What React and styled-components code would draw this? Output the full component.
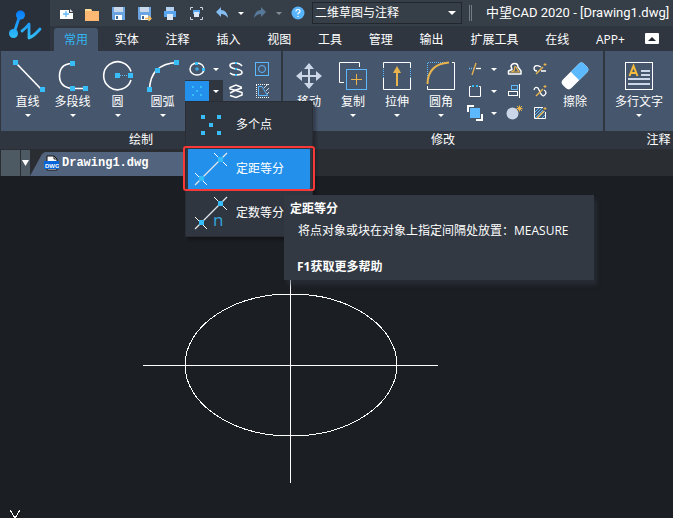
import React, { useState } from 'react'
import styled, { createGlobalStyle } from 'styled-components'

const GlobalStyle = createGlobalStyle`
  * {
    box-sizing: border-box;
  }
  body {
    margin: 0;
    background: #1b1e23;
    color: #fff;
    font-family: "Open Sans", "Noto Sans CJK SC", sans-serif;
    font-size: 12px;
    line-height: 16px;
  }
  button, select {
    font: inherit;
    color: inherit;
    border: 0;
    padding: 0;
    margin: 0;
    background: none;
  }
  svg {
    display: block;
    flex: none;
  }
`

const blue = '#38bdfb'
const sky = '#5cb8ff'
const gold = '#e9b44c'
const pale = '#cbd6e8'

const Window = styled.div`
  display: flex;
  flex-direction: column;
  min-height: 100vh;
  overflow-x: clip;
  background: #1b1e23;
`

const Header = styled.header`
  display: flex;
  background: #30363f;
`

const AppButton = styled.button`
  flex: none;
  width: 50px;
  background: #2a3039;
`

const HeaderRows = styled.div`
  flex: 1;
  min-width: 0;
`

const TitleBar = styled.div`
  display: flex;
  align-items: center;
  height: 26px;
  padding-left: 3px;
  background: #363e47;
`

const ToolButton = styled.button`
  display: flex;
  flex: none;
  align-items: center;
  justify-content: center;
  width: ${props => props.$narrow ? `12px` : `26px`};
  height: 24px;
`

const SelectBox = styled.div`
  position: relative;
  flex: none;
  margin-left: 1px;
  svg {
    position: absolute;
    top: 9px;
    right: 6px;
    pointer-events: none;
  }
`

const Workspace = styled.select`
  width: 150px;
  height: 22px;
  padding: 0 2px;
  appearance: none;
  border: 1px solid #22272e;
  background: #363e47;
  outline: 0;
  option {
    background: #363e47;
  }
`

const Grip = styled.span`
  flex: none;
  width: 3px;
  height: 16px;
  margin: 0 14px 0 7px;
  border: solid #747b83;
  border-width: 0 1px;
`

const Title = styled.h1`
  margin: 0;
  font-family: Roboto, "Noto Sans CJK SC", sans-serif;
  font-size: 13px;
  font-weight: 400;
  white-space: nowrap;
`

const TabBar = styled.div`
  display: flex;
  align-items: flex-end;
  height: 25px;
  padding: 0 14px 0 4px;
`

const Tabs = styled.nav`
  display: flex;
  flex: 1;
  justify-content: space-between;
  margin-right: 10px;
`

const Tab = styled.button`
  height: 23px;
  padding: 0 10px;
  border-radius: 3px 3px 0 0;
  white-space: nowrap;
  color: ${props => props.$active ? `#33b5f2` : `#fff`};
  background: ${props => props.$active ? `#46566c` : `none`};
`

const Collapse = styled.button`
  display: flex;
  align-items: center;
  justify-content: center;
  align-self: center;
  width: 14px;
  height: 11px;
  border-radius: 1px;
  background: #fff;
`

const Ribbon = styled.section`
  position: relative;
  z-index: 1;
  display: flex;
  gap: 2px;
  padding-left: 1px;
  background: #30363f;
`

const Panel = styled.section`
  flex: ${props => props.$fill ? `1 0 107px` : `none`};
`

const PanelBody = styled.div`
  display: flex;
  height: 80px;
  padding: ${props => props.$flush ? `7px 0 0` : `7px 6px 0 4px`};
  background: #46566c;
`

const PanelTitle = styled.h2`
  margin: 0;
  font-size: 12px;
  font-weight: 400;
  line-height: 18px;
  text-align: center;
  background: #30363f;
`

const BigButton = styled.button`
  display: flex;
  flex-direction: column;
  align-items: center;
  width: ${props => props.$width}px;
  height: 64px;
  white-space: nowrap;
  span {
    margin-bottom: 4px;
  }
`

const SmallGrid = styled.div`
  display: grid;
  grid-template-columns: 38px 26px 26px;
  grid-auto-rows: 22px;
`

const SmallButton = styled.button`
  display: flex;
  align-items: center;
  justify-content: center;
`

const Split = styled.div`
  position: relative;
  display: flex;
  align-items: center;
  background: ${props => props.$open ? `#30363f` : `none`};
`

const SplitMain = styled(SmallButton)`
  width: 24px;
  height: 20px;
  background: ${props => props.$open ? `#2391eb` : `none`};
`

const SplitCaret = styled(SmallButton)`
  width: 14px;
  height: 20px;
`

const Menu = styled.div`
  position: absolute;
  top: 21px;
  left: 0;
  display: grid;
  gap: 4px;
  width: 128px;
  padding: 3px 2px;
  border: 1px solid #2a2e34;
  background: #30363f;
  box-shadow: 3px 3px 3px rgba(0, 0, 0, 0.3);
`

const MenuItem = styled.button`
  display: flex;
  align-items: center;
  gap: 5px;
  width: 100%;
  height: 40px;
  padding-left: 3px;
  text-align: left;
  white-space: nowrap;
  background: ${props => props.$active ? `#2391eb` : `none`};
`

const Marked = styled.div`
  position: relative;
  &::after {
    content: '';
    position: absolute;
    inset: -3px -5px -2px;
    border: 2px solid #f93838;
    border-radius: 3px;
    pointer-events: none;
  }
`

const Tooltip = styled.div`
  position: absolute;
  top: 93px;
  left: 98px;
  padding: 6px 26px 5px 6px;
  white-space: nowrap;
  background: #323943;
  box-shadow: 3px 5px 4px rgba(50, 57, 67, 0.5);
  p {
    margin: 6px 0 20px 8px;
  }
  strong {
    display: block;
  }
  strong:last-child {
    margin-left: 7px;
  }
`

const DocBar = styled.div`
  display: flex;
  align-items: flex-end;
  height: 27px;
  padding-left: 1px;
  background: #2a2d32;
`

const DocBlank = styled.div`
  width: 19px;
  height: 26px;
  margin-right: 1px;
  background: #4d5a63;
`

const DocList = styled.button`
  display: flex;
  align-items: center;
  justify-content: center;
  width: 9px;
  height: 26px;
  background: #4d5a63;
`

const DocTab = styled.button`
  display: flex;
  align-items: center;
  gap: 3px;
  width: 174px;
  height: 24px;
  padding: 0 0 2px 14px;
  font-family: "Liberation Mono", monospace;
  font-weight: 700;
  background: #52647d;
  clip-path: polygon(0 100%, 12px 2px, 15px 0, 100% 0, 100% 100%);
`

const Canvas = styled.main`
  display: flex;
  flex: 1;
  min-height: 342px;
  svg {
    width: 100%;
    height: auto;
  }
`

const Caret = ({ color = '#fff', width = 6, height = 3 }) => (
  <svg width={width} height={height} viewBox="0 0 10 5" preserveAspectRatio="none">
    <path d="M0 0H10L5 5Z" fill={color} />
  </svg>
)

const Icon = ({ size = 36, children }) => (
  <svg width={size} height={size} viewBox={`0 0 ${size} ${size}`} fill="none" stroke="#fff" strokeWidth={size > 20 ? 1.6 : 1.3}>
    {children}
  </svg>
)

// Square grips centred on each [x, y] point
const Grips = ({ points, size = 5, color = blue }) => points.map(([x, y]) => (
  <rect key={`${x}-${y}`} x={x - size / 2} y={y - size / 2} width={size} height={size} fill={color} stroke="none" />
))

const LogoIcon = () => (
  <svg width="50" height="51" viewBox="0 0 50 51" fill="none" strokeLinecap="round" strokeLinejoin="round">
    <defs>
      <linearGradient id="logo" x1="0" y1="11" x2="0" y2="39" gradientUnits="userSpaceOnUse">
        <stop offset="0" stopColor="#087cff" />
        <stop offset="1" stopColor="#34c2f5" />
      </linearGradient>
    </defs>
    <path d="M20 15L14 33M22 31Q25 29 29 24L29 38Q34 36 40 29" stroke="url(#logo)" strokeWidth="2.8" />
    <circle cx="20.500" cy="15" r="4.500" fill="url(#logo)" />
    <circle cx="13.500" cy="33.500" r="4.500" fill="url(#logo)" />
  </svg>
)

const NewIcon = () => (
  <Icon size={16}>
    <path d="M2 5H11V8H15V14H2Z" fill="#fff" stroke="none" />
    <path d="M12 4L15 7H12Z" fill="#dfe6ee" stroke="none" />
    <path d="M8 6V12M5 9H11" stroke={sky} />
  </Icon>
)

const OpenIcon = () => (
  <Icon size={16}>
    <path d="M1 4H7L8 6H15V16H1Z" fill="#ffb973" stroke="none" />
    <path d="M1 4H7L8 6H1Z" fill="#ffdc98" stroke="none" />
  </Icon>
)

const SaveIcon = ({ as }) => (
  <Icon size={16}>
    <path d="M2 2H15V15H3L2 14Z" fill="#6aa5e2" stroke="none" />
    <path d="M4 2H13V7H4Z" fill="#cad8ec" stroke="none" />
    <path d="M5 10H12V15H5Z" fill="#fff" stroke="none" />
    <path d="M6 11H8V14H6Z" fill="#416a98" stroke="none" />
    {as && <path d="M9 13.500H15M12.500 11L15 13.500L12.500 16" stroke="#ffc05c" />}
  </Icon>
)

const PrintIcon = () => (
  <Icon size={16}>
    <path d="M4 2H12V6H4Z" fill="#b5d0ef" stroke="none" />
    <path d="M2 6H14V12H2Z" fill="#58a5ef" stroke="none" />
    <path d="M5 9H11V15H5Z" fill="#dce7f5" stroke="none" />
  </Icon>
)

const PreviewIcon = () => (
  <Icon size={16}>
    <path d="M2.500 5V2.500H5M12 2.500H14.500V5M14.500 12V14.500H12M5 14.500H2.500V12" stroke={pale} strokeWidth="1" />
    <path d="M5 5H12V9H5Z" fill="#58a5ef" stroke="none" />
    <path d="M6 7H11V12H6Z" fill="#dce7f5" stroke="none" />
  </Icon>
)

const UndoIcon = () => (
  <Icon size={14}>
    <path d="M1 6L6 1V4Q12 4 13 12Q10 8 6 8V11Z" fill="#83bdf2" stroke="none" />
  </Icon>
)

const RedoIcon = () => (
  <Icon size={14}>
    <path d="M13 6L8 1V4Q2 4 1 12Q4 8 8 8V11Z" fill="#58789a" stroke="none" />
  </Icon>
)

const HelpIcon = () => (
  <Icon size={14}>
    <circle cx="7" cy="7" r="6.500" fill="#58b5fc" stroke="none" />
    <path d="M5 5.500Q5 3.500 7 3.500Q9 3.500 9 5.300Q9 6.500 7 7.500V8.500M7 10V11" strokeWidth="1.200" />
  </Icon>
)

const LineIcon = () => (
  <Icon>
    <path d="M5 4L32 32" />
    <Grips points={[[5.5, 4.5], [32.5, 31.5]]} />
  </Icon>
)

const PolylineIcon = () => (
  <Icon>
    <path d="M17 5.500Q4.500 6 4.500 18Q4.500 29 17 30.500H31" />
    <Grips points={[[17.5, 5.5], [17.5, 30.5], [30.5, 30.5]]} />
  </Icon>
)

const CircleIcon = () => (
  <Icon>
    <path d="M31 13.500A14 14 0 1 0 31 22" />
    <path d="M18 17.500H31" stroke={sky} strokeWidth="1" strokeDasharray="1 1" />
    <Grips points={[[17.5, 17.5], [30.5, 17.5]]} />
  </Icon>
)

const ArcIcon = () => (
  <Icon>
    <path d="M4.500 32Q5 6 32 4.500" />
    <Grips points={[[4.5, 31.5], [12.5, 12.5], [31.5, 4.5]]} />
  </Icon>
)

const EllipseIcon = () => (
  <Icon size={18}>
    <ellipse cx="9" cy="9" rx="7" ry="6" strokeWidth="1.500" />
    <path d="M9 7V11M7 9H11" stroke={blue} strokeWidth="1" />
    <Grips points={[[8.5, 3.5], [15.5, 9.5]]} size={3} />
  </Icon>
)

const PointsIcon = () => (
  <Icon size={16}>
    <Grips points={[[4, 4], [12, 4], [8, 8], [4, 12], [12, 12]]} size={2} />
  </Icon>
)

const SplineIcon = () => (
  <Icon size={16}>
    <path d="M14 5Q12 2 7 2Q2 2 2 4.500Q2 7 8 8Q14 9 14 11.500Q14 14 8 14Q4 14 2 12" strokeWidth="1.600" />
    <Grips points={[[8, 2], [8, 8], [8, 14]]} size={2} />
  </Icon>
)

const RegionIcon = () => (
  <Icon size={16}>
    <rect x="1.500" y="1.500" width="13" height="13" stroke={sky} strokeWidth="1" />
    <circle cx="8" cy="8" r="3.500" stroke={sky} strokeWidth="1" />
  </Icon>
)

const HelixIcon = () => (
  <Icon size={16}>
    <path d="M14 4.500L8 2L2 4.500V6L8 7.500L14 9.500V12L8 14.500L2 12.500M2 10L8 7L14 5" strokeWidth="1.500" />
  </Icon>
)

const BoundaryIcon = () => (
  <Icon size={16}>
    <path d="M2.500 2V14.500H15M2 1.500H15" strokeWidth="1" strokeDasharray="1 1" />
    <path d="M4.500 3.500H8L13.500 12.500H4.500Z" stroke={sky} strokeWidth="1" />
    <path d="M10 5L14 1M12 8L15 5M13 11L15 9" stroke={pale} strokeWidth="1" />
  </Icon>
)

const MoveIcon = () => (
  <Icon>
    <path d="M18 7V29M7 18H29" stroke={pale} strokeWidth="2" />
    <path d="M18 5L23 11H13ZM18 31L23 25H13ZM5 18L11 13V23ZM31 18L25 13V23Z" fill={pale} stroke="none" />
  </Icon>
)

const CopyIcon = () => (
  <Icon>
    <path d="M9 24.500H4.500V4.500H24.500V9" strokeWidth="1" />
    <rect x="11.500" y="11.500" width="20" height="20" stroke={sky} strokeWidth="1" />
    <path d="M21.500 16V27M16 21.500H27" stroke={gold} strokeWidth="1" />
  </Icon>
)

const StretchIcon = () => (
  <Icon>
    <path d="M4.500 10V4.500H31.500V10M31.500 20V31.500H4.500V20" strokeWidth="1" />
    <path d="M4.500 11V20M31.500 11V20" stroke={sky} strokeWidth="1" strokeDasharray="1 1" />
    <path d="M18 12V28" stroke={gold} strokeWidth="2" />
    <path d="M18 8L22 15H14Z" fill={gold} stroke="none" />
  </Icon>
)

const FilletIcon = () => (
  <Icon>
    <path d="M29 4.500H31.500V31.500H4.500V28" strokeWidth="1" />
    <path d="M4.500 20V4.500H22" stroke={sky} strokeWidth="1" strokeDasharray="1 1" />
    <path d="M4.500 26Q5 6 26 4.500" stroke={gold} strokeWidth="2" />
  </Icon>
)

const TrimIcon = () => (
  <Icon size={16}>
    <path d="M2 7.500H7" stroke={sky} strokeDasharray="1 1" />
    <path d="M9 7.500H14" />
    <path d="M5 14L9 2" stroke={gold} />
  </Icon>
)

const OffsetIcon = () => (
  <Icon size={16}>
    <path d="M2.500 13V10L6 8.500L5 5Q6 2.500 8.500 2.500Q12 2.500 12 6L15 10V13Z" strokeWidth="1.500" strokeLinejoin="round" />
    <path d="M5.500 11L8.500 9V6Q10 5 10.500 7L13 11Z" stroke={gold} strokeWidth="1.200" />
  </Icon>
)

const EditSplineIcon = ({ wave }) => (
  <Icon size={16}>
    <path d={wave ? 'M2 7Q3 3 6 5L9 11Q12 15 14 10Q14 8 12 7' : 'M9 6Q3 3 2 7Q2 10 5 10M9 10H14'} />
    <path d="M4 13L11 6" stroke={gold} strokeWidth="1.500" />
    <path d="M13 2V5M11.500 3.500H14.500" stroke={gold} strokeWidth="1" />
  </Icon>
)

const BreakIcon = () => (
  <Icon size={16}>
    <path d="M4 3.500H2.500V13.500H13.500V3.500H12" strokeWidth="1" />
    <Grips points={[[6, 3], [10, 3]]} size={2} />
  </Icon>
)

const AlignIcon = () => (
  <Icon size={16}>
    <path d="M13.500 1V15" strokeWidth="1" />
    <rect x="5.500" y="2.500" width="6" height="4" stroke={sky} strokeWidth="1" />
    <rect x="2.500" y="8.500" width="9" height="4" strokeWidth="1" />
  </Icon>
)

const OrderIcon = () => (
  <Icon size={16}>
    <path d="M1 7V1H7M9 15H15V9" strokeWidth="2" />
    <rect x="3" y="3" width="10" height="10" fill={sky} stroke="none" />
  </Icon>
)

const ExplodeIcon = () => (
  <Icon size={18}>
    <circle cx="7.500" cy="9.500" r="6" fill={pale} stroke="none" />
    <path d="M12 2L17 7M17 2L12 7M14.500 1.500V7.500M11.500 4.500H17.500" stroke={gold} strokeWidth="1" />
  </Icon>
)

const EditHatchIcon = () => (
  <Icon size={16}>
    <path d="M11 2.500H2.500V13.500H13.500V7" strokeWidth="1" />
    <path d="M3 7L7 3M3 10L10 3M3 13L11 5M6 13L13 6M10 13L13 10" stroke={sky} strokeWidth="1" />
    <path d="M5 13L12 6" stroke={gold} strokeWidth="1.500" />
    <path d="M13 2V5M11.500 3.500H14.500" stroke={gold} strokeWidth="1" />
  </Icon>
)

const EraseIcon = () => (
  <Icon>
    <g transform="rotate(45 18 18)" stroke="none">
      <rect x="12" y="3" width="12" height="30" rx="4" fill="#fff" />
      <path d="M12 18V7Q12 3 16 3H20Q24 3 24 7V18Z" fill={sky} />
    </g>
  </Icon>
)

const TextIcon = () => (
  <Icon>
    <rect x="4.500" y="4.500" width="27" height="27" strokeWidth="1" />
    <path d="M20 13H29M20 17H29M7 21H29M7 26H29" stroke={pale} strokeWidth="2" />
    <path d="M8.500 18L12.500 8L16.500 18M10 15H15" stroke="#f4bb3d" strokeWidth="2" />
  </Icon>
)

const MultiPointIcon = () => (
  <Icon size={40}>
    <Grips points={[[12, 12], [28, 12], [20, 20], [28, 28], [12, 28]]} size={4} />
  </Icon>
)

// count adds the "n" used by the divide command
const DivideIcon = ({ count }) => (
  <Icon size={40}>
    <path d="M4 36L36 4" stroke="#dfe5eb" strokeWidth="1.200" />
    <path d="M23 4L36 17M4 24L16 36" strokeWidth="1" />
    <Grips points={[[29.5, 10.5], [10.5, 29.5]]} />
    {count && <text x="22" y="33" fontSize="17" fill="#35a5df" stroke="none">n</text>}
  </Icon>
)

const AnchorIcon = () => (
  <svg width="15" height="16" viewBox="0 0 15 16">
    <path d="M3 1H10L13 4V15H3Z" fill="#fff" stroke="#111" />
    <path d="M10 1V4H13" fill="none" stroke="#111" />
    <rect y="6" width="15" height="8" fill="#0864d9" />
    <text x="1" y="13" fontSize="6" fontWeight="700" fontFamily="Liberation Sans" fill="#fff">DWG</text>
  </svg>
)

const tabs = ['常用', '实体', '注释', '插入', '视图', '工具', '管理', '输出', '扩展工具', '在线', 'APP+']

const drawTools = [
  { label: '直线', icon: <LineIcon /> },
  { label: '多段线', icon: <PolylineIcon /> },
  { label: '圆', icon: <CircleIcon /> },
  { label: '圆弧', icon: <ArcIcon /> },
]

const modifyTools = [
  { label: '移动', icon: <MoveIcon />, plain: true },
  { label: '复制', icon: <CopyIcon /> },
  { label: '拉伸', icon: <StretchIcon /> },
  { label: '圆角', icon: <FilletIcon /> },
]

const Big = ({ label, icon, plain, width = 44 }) => (
  <BigButton $width={width}>
    {icon}
    <span>{label}</span>
    {!plain && <Caret />}
  </BigButton>
)

const SplitButton = ({ label, icon, open, onToggle, children }) => (
  <Split $open={open}>
    <SplitMain $open={open} aria-label={label}>{icon}</SplitMain>
    <SplitCaret aria-label={`${label} ▾`} onClick={onToggle}><Caret /></SplitCaret>
    {open && children}
  </Split>
)

const App = () => {
  const [tab, setTab] = useState('常用')
  const [open, setOpen] = useState(true)

  return (
    <Window>
      <GlobalStyle />
      <Header>
        <AppButton aria-label="ZWCAD"><LogoIcon /></AppButton>
        <HeaderRows>
          <TitleBar>
            <ToolButton aria-label="新建"><NewIcon /></ToolButton>
            <ToolButton aria-label="打开"><OpenIcon /></ToolButton>
            <ToolButton aria-label="保存"><SaveIcon /></ToolButton>
            <ToolButton aria-label="另存为"><SaveIcon as /></ToolButton>
            <ToolButton aria-label="打印"><PrintIcon /></ToolButton>
            <ToolButton aria-label="预览"><PreviewIcon /></ToolButton>
            <ToolButton aria-label="放弃"><UndoIcon /></ToolButton>
            <ToolButton $narrow aria-label="放弃列表"><Caret /></ToolButton>
            <ToolButton aria-label="重做"><RedoIcon /></ToolButton>
            <ToolButton $narrow aria-label="重做列表"><Caret color="#858b92" /></ToolButton>
            <ToolButton aria-label="帮助"><HelpIcon /></ToolButton>
            <SelectBox>
              <Workspace aria-label="工作空间">
                <option>二维草图与注释</option>
              </Workspace>
              <Caret width={8} height={4} />
            </SelectBox>
            <Grip />
            <Title>中望CAD 2020 - [Drawing1.dwg]</Title>
          </TitleBar>
          <TabBar>
            <Tabs>
              {tabs.map(name => (
                <Tab key={name} $active={name === tab} onClick={() => setTab(name)}>{name}</Tab>
              ))}
            </Tabs>
            <Collapse aria-label="折叠">
              <svg width="8" height="4" viewBox="0 0 8 4"><path d="M4 0L8 4H0Z" fill="#22272e" /></svg>
            </Collapse>
          </TabBar>
        </HeaderRows>
      </Header>

      <Ribbon>
        <Panel>
          <PanelBody>
            {drawTools.map(tool => <Big key={tool.label} {...tool} width={45} />)}
            <SmallGrid>
              <SplitButton label="椭圆" icon={<EllipseIcon />} />
              <SmallButton aria-label="样条曲线"><SplineIcon /></SmallButton>
              <SmallButton aria-label="面域"><RegionIcon /></SmallButton>
              <SplitButton label="点" icon={<PointsIcon />} open={open} onToggle={() => setOpen(!open)}>
                <Menu>
                  <MenuItem><MultiPointIcon />多个点</MenuItem>
                  <Marked>
                    <MenuItem $active aria-describedby="measure-tip"><DivideIcon />定距等分</MenuItem>
                  </Marked>
                  <MenuItem><DivideIcon count />定数等分</MenuItem>
                  <Tooltip id="measure-tip" role="tooltip">
                    <strong>定距等分</strong>
                    <p>将点对象或块在对象上指定间隔处放置：MEASURE</p>
                    <strong>F1获取更多帮助</strong>
                  </Tooltip>
                </Menu>
              </SplitButton>
              <SmallButton aria-label="螺旋"><HelixIcon /></SmallButton>
              <SmallButton aria-label="边界"><BoundaryIcon /></SmallButton>
            </SmallGrid>
          </PanelBody>
          <PanelTitle>绘制</PanelTitle>
        </Panel>
        <Panel>
          <PanelBody>
            {modifyTools.map(tool => <Big key={tool.label} {...tool} />)}
            <SmallGrid>
              <SplitButton label="修剪" icon={<TrimIcon />} />
              <SmallButton aria-label="偏移"><OffsetIcon /></SmallButton>
              <SmallButton aria-label="编辑多段线"><EditSplineIcon /></SmallButton>
              <SplitButton label="打断" icon={<BreakIcon />} />
              <SmallButton aria-label="对齐"><AlignIcon /></SmallButton>
              <SmallButton aria-label="编辑样条曲线"><EditSplineIcon wave /></SmallButton>
              <SplitButton label="绘图次序" icon={<OrderIcon />} />
              <SmallButton aria-label="分解"><ExplodeIcon /></SmallButton>
              <SmallButton aria-label="编辑填充"><EditHatchIcon /></SmallButton>
            </SmallGrid>
            <Big label="擦除" icon={<EraseIcon />} plain />
          </PanelBody>
          <PanelTitle>修改</PanelTitle>
        </Panel>
        <Panel $fill>
          <PanelBody $flush>
            <Big label="多行文字" icon={<TextIcon />} width={68} />
          </PanelBody>
          <PanelTitle>注释</PanelTitle>
        </Panel>
      </Ribbon>

      <DocBar>
        <DocBlank />
        <DocList aria-label="图纸列表"><Caret width={7} height={6} /></DocList>
        <DocTab><AnchorIcon />Drawing1.dwg</DocTab>
      </DocBar>
      <Canvas>
        <svg fill="none" stroke="#fff" strokeWidth="1" shapeRendering="crispEdges">
          <path d="M143 189.500H438M290.500 90V307" />
          <ellipse cx="291" cy="189" rx="106" ry="71" />
          <path d="M10 334L15 342L20 334" />
        </svg>
      </Canvas>
    </Window>
  )
}

export default App
